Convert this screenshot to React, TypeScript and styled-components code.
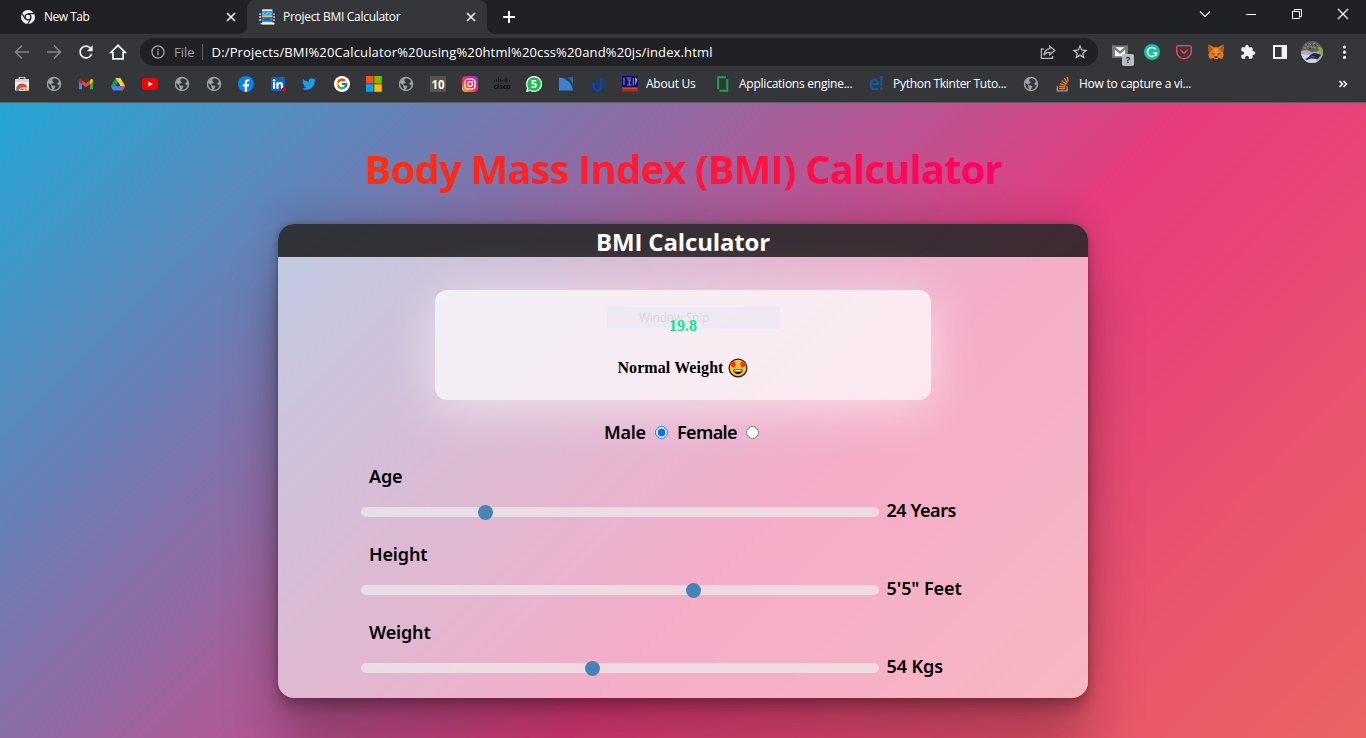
import React, { useState } from 'react';
import styled, { createGlobalStyle, css } from 'styled-components';
import { MdExtension, MdInfoOutline, MdRefresh, MdStarBorder } from 'react-icons/md';
import { FaTwitter } from 'react-icons/fa';
import { FcGoogle } from 'react-icons/fc';

const ui = '"Segoe UI", "Open Sans", "Noto Sans", sans-serif';
const strong = '"Segoe UI", "Noto Sans", sans-serif';

const GlobalStyle = createGlobalStyle`
  * { box-sizing: border-box; }
  html, body { margin: 0; height: 100%; overflow: hidden; }
  #root { height: 100%; }
`;

const Screen = styled.div`
  display: flex;
  flex-direction: column;
  width: 1366px;
  height: 738px;
  overflow: hidden;
  font-family: ${ui};
`;

/* ---------- browser chrome ---------- */

const TabStrip = styled.div`
  display: flex;
  height: 34px;
  flex: none;
  background: #35363a;
  color: #e8eaed;
  font-size: 12px;
`;

const TabShell = styled.div<{ $active?: boolean }>`
  width: ${(p) => (p.$active ? 240 : 247)}px;
  background: #202124;
  ${(p) => !p.$active && css`border-bottom-right-radius: 8px;`}
`;

const Tab = styled.div<{ $active?: boolean }>`
  display: flex;
  align-items: center;
  height: 34px;
  padding: 0 11px 0 ${(p) => (p.$active ? 12 : 20)}px;
  border-radius: 8px 8px 0 0;
  color: #fff;
  ${(p) => p.$active && css`background: #35363a;`}
`;

const TabTitle = styled.span<{ $spacing: number }>`
  flex: 1;
  margin-left: 8px;
  line-height: 16px;
  white-space: nowrap;
  letter-spacing: ${(p) => p.$spacing}px;
`;

const StripRest = styled.div`
  flex: 1;
  display: flex;
  justify-content: space-between;
  padding: 11px 17px 0 16px;
  background: #202124;
  border-bottom-left-radius: 8px;
`;

const WindowButtons = styled.div`
  display: flex;
  gap: 34px;
  margin-top: -3px;
`;

const Toolbar = styled.div`
  display: flex;
  align-items: center;
  flex: none;
  height: 36px;
  padding: 0 14px;
  background: #35363a;
  color: #f1f3f4;
`;

const Icons = styled.div`
  display: flex;
  align-items: center;
  gap: 16px;
`;

const Glyph = styled.svg`
  display: block;
  flex: none;
  overflow: visible;
`;

const Omnibox = styled.div`
  display: flex;
  align-items: center;
  width: 958px;
  height: 28px;
  margin: 0 14px;
  padding: 0 9px 0 10px;
  border-radius: 14px;
  background: #202124;
  color: #9aa0a6;
  font-size: 13px;
  line-height: 18px;
`;

const Scheme = styled.span`
  margin-left: 8px;
  padding-right: 7px;
  border-right: 1px solid #5f6368;
  line-height: 16px;
`;

const Url = styled.span`
  flex: 1;
  margin-left: 9px;
  color: #fff;
  letter-spacing: 0.147px;
  white-space: nowrap;
`;

const Bookmarks = styled.div`
  display: flex;
  align-items: center;
  gap: 16px;
  flex: none;
  height: 33px;
  padding: 0 18px 4px 14px;
  background: #35363a;
  border-bottom: 1px solid #5c5d61;
  color: #fff;
  font-size: 12px;
  line-height: 16px;
`;

const Bookmark = styled.div<{ $width?: number; $spacing?: number }>`
  display: flex;
  align-items: center;
  gap: 8px;
  width: ${(p) => p.$width ?? 16}px;
  letter-spacing: ${(p) => p.$spacing ?? 0}px;
  white-space: nowrap;
`;

const More = styled.div`
  margin-left: auto;
`;

/* ---------- page ---------- */

const Page = styled.main`
  flex: 1;
  display: flex;
  flex-direction: column;
  align-items: center;
  overflow: hidden;
  padding-top: 39px;
  background: linear-gradient(135deg, #23a6d5 0, #e73c7e 848px, #ee7752 1696px);
`;

const Title = styled.h1`
  margin: 0 0 28px;
  font-size: 40px;
  font-weight: 700;
  line-height: 54px;
  letter-spacing: -0.86px;
  color: transparent;
  background: linear-gradient(to right, #fb300c, #ff0062);
  background-clip: text;
  -webkit-background-clip: text;
`;

const Card = styled.section`
  width: 810px;
  height: 474px;
  flex: none;
  border-radius: 16px;
  overflow: hidden;
  background: rgba(255, 255, 255, 0.58);
  color: #000;
`;

const CardShadow = styled.div`
  border-radius: 16px;
  box-shadow: rgba(0, 0, 0, 0.25) 0 54px 55px, rgba(0, 0, 0, 0.12) 0 -12px 30px,
    rgba(0, 0, 0, 0.12) 0 4px 6px, rgba(0, 0, 0, 0.17) 0 12px 13px,
    rgba(0, 0, 0, 0.09) 0 -3px 5px;
`;

const CardHeader = styled.h2`
  margin: 0;
  height: 33px;
  padding-top: 1px;
  background: rgba(0, 0, 0, 0.75);
  color: #fff;
  font-size: 24px;
  font-weight: 700;
  line-height: 34px;
  letter-spacing: -0.15px;
  text-align: center;
`;

const Result = styled.div`
  position: relative;
  width: 496px;
  height: 110px;
  margin: 33px auto 20px;
  padding-top: 26px;
  border-radius: 12px;
  background: rgba(255, 255, 255, 0.73);
  box-shadow: 0 8px 50px rgba(255, 255, 255, 0.6);
  font: bold 16px/20px "Times New Roman", "Liberation Serif", serif;
  text-align: center;
`;

const Score = styled.div`
  position: relative;
  color: #14e383;
`;

const Verdict = styled.div`
  display: flex;
  justify-content: center;
  align-items: center;
  gap: 4px;
  margin-top: 22px;
  padding-right: 1px;
  letter-spacing: 0.08px;
`;

const Ghost = styled.div`
  position: absolute;
  left: 172px;
  top: 17px;
  width: 173px;
  height: 22px;
  padding-left: 32px;
  background: rgba(210, 222, 250, 0.25);
  color: rgba(120, 90, 100, 0.17);
  font: 12px/22px ${ui};
  letter-spacing: -0.25px;
  text-align: left;
`;

/* positioned so that it paints above the glow of the result panel */
const Gender = styled.div`
  position: relative;
  display: flex;
  align-items: center;
  height: 24px;
  margin-bottom: 20px;
  padding-left: 326px;
  font-family: ${strong};
  font-size: 18px;
  font-weight: 600;
  line-height: 24px;
`;

const Option = styled.label<{ $width: number; $spacing: number }>`
  display: flex;
  align-items: center;
  justify-content: space-between;
  width: ${(p) => p.$width}px;
  margin-right: 9px;
  letter-spacing: ${(p) => p.$spacing}px;
`;

const Radio = styled.input`
  width: 13px;
  height: 13px;
  margin: 1px 0 0;
`;

const Field = styled.div`
  position: relative;
  height: 78px;
  padding-left: 83px;
  font-family: ${strong};
  font-size: 18px;
  font-weight: 600;
  line-height: 24px;
`;

const FieldLabel = styled.div`
  padding-left: 8px;
  margin-bottom: 10px;
  letter-spacing: -0.15px;
`;

const FieldRow = styled.div`
  display: flex;
  align-items: center;
  height: 24px;
`;

const Range = styled.input`
  appearance: none;
  width: 518px;
  height: 10px;
  margin: 4px 8px 0 0;
  border-radius: 5px;
  background: rgba(236, 236, 236, 0.7);
  &::-webkit-slider-thumb {
    appearance: none;
    width: 15px;
    height: 15px;
    border-radius: 50%;
    background: #4883b7;
  }
`;

const Value = styled.span<{ $spacing: number }>`
  margin-left: -0.5px;
  letter-spacing: ${(p) => p.$spacing}px;
`;

/* ---------- icons ---------- */

const Icon = ({ children, size = 16, box = 16 }: { children: React.ReactNode; size?: number; box?: number }) => (
  <Glyph width={size} height={size} viewBox={`0 0 ${box} ${box}`} fill="none">{children}</Glyph>
);

const ChromeMono = () => (
  <Icon>
    <circle cx="8" cy="8" r="7" fill="#f1f3f4" />
    <circle cx="8" cy="8" r="2.9" fill="#f1f3f4" stroke="#202124" strokeWidth="1.3" />
    <path d="M8 4.6h6.4M5.1 9.8L1.9 4.4M10.9 9.8L7.7 15" stroke="#202124" strokeWidth="1.2" />
  </Icon>
);

const ProjectIcon = () => (
  <Icon>
    <path d="M3 .6h10.4v3H3zM3 12.4h10.4v3H3z" fill="#f4ead2" />
    <path d="M3 1.700h10.500v5H3z" fill="#2d9cf0" />
    <path d="M3 6.300h10.500v2H3z" fill="#fbb84b" />
    <path d="M3 8.300h10.500v4.300H3z" fill="#1b7be4" />
    <path d="M5.200 3.600l-1 1 1 1M10.800 3.600l1 1-1 1M7 5.500l2-2" stroke="#cfeaff" strokeWidth=".8" />
    <path d="M.2 5.200h2M.2 8h2M.2 11h2M14.200 5.200h1.600M14.200 8h1.600M14.200 11h1.600M1.500 14.600h11M3.500 1.100h9" stroke="#f4ead2" strokeWidth="1.300" />
    <circle cx="14.200" cy="14.500" r="1.300" fill="#f4ead2" />
    <path d="M5 10.400h6" stroke="#0c59b8" strokeWidth="1.400" />
  </Icon>
);

const Cross = () => (
  <Icon size={10} box={10}><path d="M1 1l8 8M9 1L1 9" stroke="#f1f3f4" strokeWidth={1.7} /></Icon>
);

const Globe = () => (
  <Icon>
    <circle cx="8" cy="8" r="7.1" fill="#9aa0a6" />
    <path d="M9.500 1.800C7.400 2.300 6 3.300 6.200 4.500c.2 1.100 1.500 1 1.500 1.900 0 .8-1.700.5-2.200 1.500-.5 1.100.9 1.400 2.300 1.700 1.500.3 1.800 1.200 1.100 2.200-.6.9-1.500 1.500-1.200 2.800 3.500-.2 6.200-2.600 6.200-5.800-1.200.4-2.200.1-2.500-.7-.4-1.100 1-1.200 1.500-2.400.3-1-.8-3.200-3.400-3.900z" fill="#35363a" />
    <path d="M1.700 7.200c1.900 0 2.300.9 3.100 1.900.8.900.4 1.400.5 2.300.1.900.9 1.300.7 2.400C3.300 13 1.600 10.700 1.700 7.200z" fill="#35363a" />
    <circle cx="8" cy="8" r="6.500" stroke="#9aa0a6" strokeWidth="1.300" />
  </Icon>
);

const WebStore = () => (
  <Icon>
    <path d="M5.200 3V1.500h5.600V3" stroke="#c8cbd0" strokeWidth="1.200" />
    <path d="M1 3h14v11.500H1z" fill="#eceef0" />
    <path d="M1 3h14v3H1z" fill="#d3d5d9" />
    <path d="M2.700 14.500a5.300 5.300 0 0 1 -.2-3c1-3 3-4 5.500-4s4.700 1.200 5.300 4z" fill="#ea4335" />
    <path d="M2.700 14.500a5.300 5.300 0 0 1 .2-4l3.300 4z" fill="#34a853" />
    <path d="M13.300 14.500a5.300 5.300 0 0 0-.4-3.500H8v3.500z" fill="#fbbc05" />
    <path d="M5.400 14.500a2.600 2.600 0 0 1 5.200 0z" fill="#4285f4" stroke="#fff" strokeWidth=".7" />
  </Icon>
);

const Gmail = () => (
  <Icon>
    <path d="M1 4v9.200h3V7z" fill="#4285f4" />
    <path d="M15 4v9.200h-3V7z" fill="#34a853" />
    <path d="M4 4.200v4L8 11.200l4-3v-4L8 7.200z" fill="#ea4335" />
    <path d="M1 4.200v1.900l3 2.200V4.200L3.200 3.300C2.300 2.600 1 3.200 1 4.200z" fill="#c5221f" />
    <path d="M15 4.200v1.900l-3 2.200V4.200l.8-.9c.9-.7 2.200-.1 2.200.9z" fill="#fbbc04" />
  </Icon>
);

const Drive = () => (
  <Icon>
    <path d="M5.600 2h4.800L5.600 10.300H.800z" fill="#0f9d58" />
    <path d="M5.600 2h4.800l4.800 8.300h-4.800z" fill="#ffcd40" />
    <path d="M3.200 14.500L.8 10.300 3.200 10h12l-2.400 4.500z" fill="#4285f4" />
    <path d="M10.400 10.300h4.800l-2.400 4.200z" fill="#ea4335" />
    <path d="M8 6.200l-2.400 4.100h4.800z" fill="#35363a" />
  </Icon>
);

const YouTube = () => (
  <Icon>
    <rect x="0" y="2.300" width="16" height="11.400" rx="3" fill="#f00" />
    <path d="M6.300 5.400v5.200L10.900 8z" fill="#fff" />
  </Icon>
);

const Facebook = () => (
  <Icon>
    <circle cx="8" cy="8" r="8" fill="#0a80f5" />
    <path d="M6.800 16v-5.500h-2V8.200h2V6.500c0-2.100 1.200-3.200 3-3.200.9 0 1.600.1 1.600.1v1.900h-1c-1 0-1.300.6-1.300 1.200v1.700h2.200l-.4 2.300H9.100V16z" fill="#fff" />
  </Icon>
);

const LinkedIn = () => (
  <Icon>
    <rect x="1" y="1" width="14" height="14" rx="1" fill="#0a66c2" />
    <path d="M3 6.300h2.100v6.500H3zM6.400 6.300h2v.9c.4-.6 1.100-1.100 2.100-1.100 2 0 2.500 1.300 2.500 3.200v3.500h-2.100V9.600c0-.8 0-1.700-1.100-1.700-1 0-1.300.8-1.300 1.700v3.200H6.400z" fill="#fff" />
    <circle cx="4.050" cy="4.200" r="1.200" fill="#fff" />
    <circle cx="13.800" cy="13.800" r="2.200" fill="#cc1016" />
  </Icon>
);

const Google = () => (
  <Icon>
    <circle cx="8" cy="8" r="8" fill="#fff" />
    <FcGoogle x="1.500" y="1.500" width="13" height="13" size={13} />
  </Icon>
);

const Microsoft = () => (
  <Icon>
    <path d="M0 0h7.500v7.500H0z" fill="#f25022" />
    <path d="M8.300 0h7.500v7.500H8.300z" fill="#7fba00" />
    <path d="M0 8.300h7.500v7.500H0z" fill="#00a4ef" />
    <path d="M8.300 8.300h7.500v7.500H8.300z" fill="#ffb900" />
  </Icon>
);

const TenTile = () => (
  <Icon>
    <path d="M0 0h16v16H0z" fill="#57544a" />
    <text x="8" y="12.500" fill="#fff" fontSize="11.500" fontWeight="700" textAnchor="middle" fontFamily="Open Sans, sans-serif">10</text>
  </Icon>
);

const Instagram = () => (
  <Icon>
    <defs>
      <linearGradient id="ig" x1="0" y1="1" x2=".8" y2="0">
        <stop offset="0" stopColor="#fdc53e" />
        <stop offset=".45" stopColor="#f0323f" />
        <stop offset="1" stopColor="#a52bd6" />
      </linearGradient>
    </defs>
    <rect width="16" height="16" rx="3.800" fill="url(#ig)" />
    <rect x="3" y="3" width="10" height="10" rx="3" stroke="#fff" strokeWidth="1.200" />
    <circle cx="8" cy="8" r="2.400" stroke="#fff" strokeWidth="1.200" />
    <circle cx="10.900" cy="5.100" r=".7" fill="#fff" />
  </Icon>
);

const Cisco = () => (
  <Icon>
    <path d="M.6 4v1.800M2.600 3v2.800M4.500 1.300v5M6.400 3v2.800M8.200 4v1.800M10 3v2.800M11.900 1.300v5M13.700 3v2.800M15.500 4v1.800" stroke="#17181a" strokeWidth=".9" />
    <text x="8" y="12.600" fill="#111214" fontSize="7" fontWeight="700" textAnchor="middle" fontFamily="Open Sans, sans-serif">cisco</text>
  </Icon>
);

const WhatsApp = () => (
  <Icon>
    <path d="M8 0a8 8 0 1 1-3.800 15L0 16l1.100-4A8 8 0 0 1 8 0z" fill="#fff" />
    <path d="M8 1.200a6.800 6.800 0 1 1-3.500 12.600l-2.700.7.700-2.600A6.800 6.800 0 0 1 8 1.200z" fill="#12c24a" />
    <text x="8" y="12" fill="#fff" fontSize="11" fontWeight="700" textAnchor="middle" fontFamily="Open Sans, sans-serif">5</text>
  </Icon>
);

const BlueQuarter = () => (
  <Icon>
    <path d="M1 1.500c7 0 13 5.500 14 13.100H1z" fill="#3d82d2" />
    <path d="M9.500 1.200H15v7.600C13.700 5.200 12 3 9.500 1.200z" fill="#2a6cb8" />
  </Icon>
);

const BlueU = () => (
  <Icon>
    <path d="M3.700 6.200v4.200a3.700 3.700 0 0 0 7.400 0V1.600" stroke="#0c3f94" strokeWidth="3.600" />
    <path d="M3.600 7v3.500a3.800 3.800 0 0 0 7.600 0V2.400" stroke="#1b57b8" strokeWidth=".6" />
    <path d="M7.300 5v4.500" stroke="#0c3f94" strokeWidth="1.600" />
  </Icon>
);

const AboutIcon = () => (
  <Icon>
    <path d="M0 0h16v11H0z" fill="#0c0f6e" />
    <path d="M0 11h16v4.500H0z" fill="#b5281c" />
    <path d="M2 1.500v7.500M4.500 2h5M5.500 4h3.500M7.200 4v4.500M5 9h4.500M11.300 2v7.500" stroke="#a49fc0" strokeWidth=".9" />
    <path d="M13.500 1l1.600 2.500-1.600 6z" fill="#dfe6ff" />
    <path d="M1 12.600h14" stroke="#d6572f" strokeWidth=".8" />
  </Icon>
);

const GreenBracket = () => (
  <Icon>
    <path d="M4.500 14.700h7.800V3M11 1.200H3.100V13.200" stroke="#12a843" strokeWidth="2" />
  </Icon>
);

const EMark = () => (
  <Icon><text x="0" y="13.800" fill="#1a57a3" fontSize="19" fontWeight="600" fontFamily="Open Sans, sans-serif" textLength="15">e!</text></Icon>
);

const StackOverflow = () => (
  <Icon>
    <path d="M2.300 10.300v4.600h9.800v-4.600" stroke="#9b9da0" strokeWidth="1.300" />
    <path d="M4 12.700h6.300M4.100 10.300l6.200.7M4.900 7.600l5.800 1.700M6.700 4.700l4.800 3.400M9.300 2.200l3 4.800M12.300 1l.9 4.500" stroke="#f0812a" strokeWidth="1.300" />
  </Icon>
);

const Share = () => (
  <Glyph width={16} height={16} viewBox="-1 0 16 16" fill="none">
    <path d="M3.800 5H1.400v9.300h11.200v-2.200" stroke="#b4b6b9" strokeWidth="1.300" />
    <path d="M9.800 2.200L14.800 6.400l-5 4.200V8.300C7.200 8.200 5.200 9 3.900 11.200 4.300 7.300 6.400 4.900 9.800 4.600z" stroke="#b4b6b9" strokeWidth="1.300" />
  </Glyph>
);

const MailBadge = () => (
  <Icon>
    <path d="M0 1.500h16v12.300H0z" fill="#777" />
    <path d="M2.600 3.200h10.800v9H2.600z" fill="#f4f4f4" />
    <path d="M1.500 12.500V3l6.500 5.600L14.500 3v9.500" stroke="#777" strokeWidth="2.200" />
    <rect x="10" y="10" width="12" height="12" rx="2" fill="#b9bbbe" />
    <text x="16" y="19.300" fill="#222" fontSize="9.500" fontWeight="700" textAnchor="middle" fontFamily="Open Sans, sans-serif">?</text>
  </Icon>
);

const Grammarly = () => (
  <Icon>
    <circle cx="8" cy="8" r="8" fill="#15c39a" />
    <path d="M11.500 5.200A4.500 4.500 0 1 0 12.400 8.800H9.200M12.400 8.400v3.200" stroke="#fff" strokeWidth="1.400" />
  </Icon>
);

const Pocket = () => (
  <Icon>
    <path d="M2 1.700h12c.7 0 1.200.5 1.200 1.200V7.500a7.200 7.200 0 0 1-14.400 0V2.900c0-.7.5-1.200 1.200-1.200z" stroke="#ef4056" strokeWidth="1.500" />
    <path d="M4.800 6.200L8 9.300l3.200-3.100" stroke="#ef4056" strokeWidth="1.600" strokeLinecap="round" />
  </Icon>
);

const Fox = () => (
  <Icon>
    <path d="M.5.500L6.400 3.600h3.200L15.500.5l.4 4.500-1 3.300.8 3-1.500 3.600-3.600-1-1.600 1.200H7l-1.600-1.200-3.600 1L.3 11.300l.8-3L.1 5z" fill="#e2761b" />
    <path d="M.5.500l4.600 4.700L1.100 8.300.1 5zM15.500.5l-4.600 4.700 4 3.100 1-3.300z" fill="#b0561a" />
    <path d="M6.400 3.600h3.200l1 4.900L8 13 5.400 8.500z" fill="#f08a2a" />
    <path d="M3.600 9.200l3 .3-.6 1.500zM12.400 9.200l-3 .3.600 1.500z" fill="#2b3440" />
    <path d="M5.600 12.600l1.400 2.300h2l1.400-2.300L9.500 15H6.500z" fill="#d7c1b3" />
    <path d="M6.600 12.300h2.800v1.500H6.600z" fill="#1f2329" />
  </Icon>
);

const SidePanel = () => (
  <Icon>
    <path d="M1 1h14v14H1z" fill="#f1f3f4" />
    <path d="M3 3h6.600v10H3z" fill="#35363a" />
  </Icon>
);

const Avatar = () => (
  <Icon size={22} box={22}>
    <defs><clipPath id="av"><circle cx="11" cy="11" r="11" /></clipPath></defs>
    <g clipPath="url(#av)">
      <path d="M0 0h22v22H0z" fill="#625f59" />
      <path d="M0 10l6-1 4 2 12-1v12H0z" fill="#a9aeb6" />
      <path d="M17 5l5 3v7l-4-2z" fill="#7fae45" />
      <path d="M0 13l8 1 6 3 3 5H0z" fill="#d3d5da" />
      <path d="M4 18c4-1 5-5 9-6 3 0 5 1 7 2l-3 4-7-.5L6 19z" fill="#1d2a42" />
      <path d="M10 15.500l4 .5" stroke="#3d6db0" strokeWidth="1.200" />
      <path d="M4 3l2 1M8 2l2 2M12 3l2-1M6 6l2-1M12 6l3 1M3 7h2M10 5l1 2M16 4l1 1" stroke="#9b988f" strokeWidth="1" />
      <path d="M6 3l1 1M10 3l1 1M8 7l2 1M14 4l1 1" stroke="#35332f" strokeWidth="1" />
    </g>
  </Icon>
);

const HeartEyes = () => (
  <Icon size={20} box={20}>
    <circle cx="10" cy="10" r="8.900" fill="#fcc22f" stroke="#1a1a1a" strokeWidth="1.200" />
    <path d="M6.300 9.800C4 9 2 7.700 1.900 5.900c0-1.600 1.700-2.200 2.800-1.100.5-1.500 2.400-1.600 2.900-.1.400 1.800-.3 3.500-1.300 5.100zM13.700 9.800c2.300-.8 4.300-2.100 4.400-3.900 0-1.600-1.700-2.200-2.800-1.100-.5-1.500-2.400-1.600-2.900-.1-.4 1.800.3 3.500 1.300 5.100z" fill="#f03a17" />
    <path d="M5.300 11.600h9.400c0 2.800-1.900 4.600-4.700 4.600s-4.700-1.800-4.700-4.600z" fill="#2a1a12" />
    <path d="M6.300 12.100h7.400l-.4 1.500H6.700z" fill="#fff" />
  </Icon>
);

const Bird = () => <FaTwitter size={14} color="#1d9bf0" />;

const singleBookmarks = [
  WebStore, Globe, Gmail, Drive, YouTube, Globe, Globe, Facebook, LinkedIn, Bird,
  Google, Microsoft, Globe, TenTile, Instagram, Cisco, WhatsApp, BlueQuarter, BlueU,
];

/* ---------- composition ---------- */

const fields = [
  { label: 'Age', value: '24 Years', at: 232.6, spacing: -0.43 },
  { label: 'Height', value: '5\'5" Feet', at: 646.1, spacing: -0.08 },
  { label: 'Weight', value: '54 Kgs', at: 445.3, spacing: -0.1 },
];

const Slider = ({ label, value, at, spacing }: (typeof fields)[number]) => {
  const [position, setPosition] = useState(at);
  return (
    <Field>
      <FieldLabel>{label}</FieldLabel>
      <FieldRow>
        <Range type="range" min={0} max={1000} step="any" value={position} onChange={(e) => setPosition(+e.target.value)} />
        <Value $spacing={spacing}>{value}</Value>
      </FieldRow>
    </Field>
  );
};

export default function App() {
  return (
    <Screen>
      <GlobalStyle />
      <TabStrip>
        <TabShell>
          <Tab>
            <ChromeMono />
            <TabTitle $spacing={-0.5}>New Tab</TabTitle>
            <Cross />
          </Tab>
        </TabShell>
        <TabShell $active>
          <Tab $active>
            <ProjectIcon />
            <TabTitle $spacing={-0.29}>Project BMI Calculator</TabTitle>
            <Cross />
          </Tab>
        </TabShell>
        <StripRest>
          <Icon size={12} box={12}><path d="M6 0v12M0 6h12" stroke="#fff" strokeWidth="2" /></Icon>
          <WindowButtons>
            <Icon size={12} box={12}><path d="M1 3.500l5 5 5-5" stroke="#eceded" strokeWidth="1.100" /></Icon>
            <Icon size={12} box={12}><path d="M1 6.500h10" stroke="#fff" strokeWidth="1" /></Icon>
            <Icon size={12} box={12}><path d="M1.500 3.500h7v7h-7zM3.500 3.500v-2h7v7h-2" stroke="#fff" strokeWidth="1" /></Icon>
            <Icon size={12} box={12}><path d="M1 1l10 10M11 1L1 11" stroke="#fff" strokeWidth="1.200" /></Icon>
          </WindowButtons>
        </StripRest>
      </TabStrip>

      <Toolbar>
        <Icons>
          <Icon><path d="M15 8H2M8 1.500L1.500 8 8 14.500" stroke="#86878a" strokeWidth="1.600" /></Icon>
          <Icon><path d="M1 8h13M8 1.500L14.500 8 8 14.500" stroke="#86878a" strokeWidth="1.600" /></Icon>
          <Icon><MdRefresh x={-2} y={-2} size={20} color="#f1f3f4" /></Icon>
          <Icon><path d="M.8 8.500L8 1.300l7.200 7.200h-2.100v6.300H2.900V8.500z" stroke="#f1f3f4" strokeWidth="1.700" /></Icon>
        </Icons>
        <Omnibox>
          <MdInfoOutline size={16} />
          <Scheme>File</Scheme>
          <Url>D:/Projects/BMI%20Calculator%20using%20html%20css%20and%20js/index.html</Url>
          <Icons>
            <Share />
            <MdStarBorder size={18} color="#c4c6c9" />
          </Icons>
        </Omnibox>
        <Icons>
          <MailBadge />
          <Grammarly />
          <Pocket />
          <Fox />
          <MdExtension size={16} />
          <SidePanel />
          <Icon><g transform="translate(-3 -3)"><Avatar /></g></Icon>
          <Icon>
            <circle cx="8.500" cy="3" r="1.600" fill="#f1f3f4" />
            <circle cx="8.500" cy="8.200" r="1.600" fill="#f1f3f4" />
            <circle cx="8.500" cy="13.400" r="1.600" fill="#f1f3f4" />
          </Icon>
        </Icons>
      </Toolbar>

      <Bookmarks>
        {singleBookmarks.map((Mark, i) => <Bookmark key={i}><Mark /></Bookmark>)}
        <Bookmark $width={77} $spacing={-0.22}><AboutIcon />About Us</Bookmark>
        <Bookmark $width={138} $spacing={-0.24}><GreenBracket />Applications engine...</Bookmark>
        <Bookmark $width={138} $spacing={-0.29}><EMark />Python Tkinter Tuto...</Bookmark>
        <Bookmark><Globe /></Bookmark>
        <Bookmark $width={138} $spacing={-0.24}><StackOverflow />How to capture a vi...</Bookmark>
        <More>
          <Icon size={10} box={10}><path d="M1.500 2l3 3-3 3M5.500 2l3 3-3 3" stroke="#f1f3f4" strokeWidth="1.600" /></Icon>
        </More>
      </Bookmarks>

      <Page>
        <Title>Body Mass Index (BMI) Calculator</Title>
        <CardShadow>
          <Card>
            <CardHeader>BMI Calculator</CardHeader>
            <Result>
              <Ghost>Window Snip</Ghost>
              <Score>19.8</Score>
              <Verdict>Normal Weight <HeartEyes /></Verdict>
            </Result>
            <Gender>
              <Option $width={64} $spacing={-0.3}>Male <Radio type="radio" name="gender" defaultChecked /></Option>
              <Option $width={82} $spacing={-0.6}>Female <Radio type="radio" name="gender" /></Option>
            </Gender>
            {fields.map((f) => <Slider key={f.label} {...f} />)}
          </Card>
        </CardShadow>
      </Page>
    </Screen>
  );
}
